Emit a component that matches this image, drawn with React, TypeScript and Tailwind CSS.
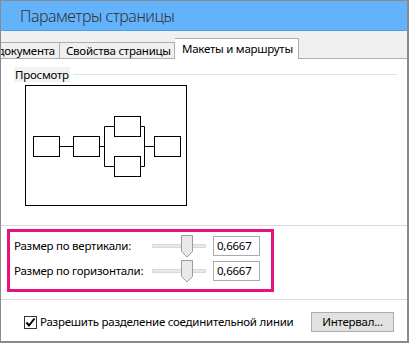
import React from "react";

function Slider() {
  return (
    <div className="relative w-[54px] h-[22px] flex items-center">
      <div className="w-full h-[4px] bg-[#e7e7e7] border border-[#d9d9d9]" />
      <svg className="absolute left-[29px] top-0" width="12" height="23" viewBox="0 0 12 23">
        <path d="M0.5 0.5 H11.5 V16.5 L6 22 L0.5 16.5 Z" fill="#e9e9e9" stroke="#9c9c9c" />
      </svg>
    </div>
  );
}

function SizeRow({ label }: { label: string }) {
  return (
    <div className="flex items-center h-[20px]">
      <span className="w-[138px] whitespace-nowrap">{label}</span>
      <Slider />
      <div className="ml-[7px] w-[47px] h-[20px] border border-[#ababab] bg-white flex items-center pl-[3px]">0,6667</div>
    </div>
  );
}

export default function App() {
  return (
    <div
      className="w-[409px] h-[343px] bg-white flex flex-col border-l border-r-2 border-b-2 border-t border-[#8a8a8a] text-[11.5px] tracking-[-0.25px] text-black whitespace-nowrap"
      style={{ fontFamily: '"Segoe UI", "Noto Sans", sans-serif' }}
    >
      {/* title */}
      <div className="h-[30px] bg-[#63b3fc] border-b border-[#4c9fe6] flex items-center pl-[19px] text-[16px] tracking-[-0.5px] font-light text-[#333]">
        Параметры страницы
      </div>

      {/* tabs */}
      <div className="h-[28px] bg-[#f0f0f0] border-b border-[#adadad] flex items-end">
        <div className="h-[17px] -mb-px border border-l-0 border-[#adadad] bg-[#f0f0f0] flex items-center pr-[4px] overflow-hidden w-[59px] justify-end">
          документа
        </div>
        <div className="h-[17px] -mb-px border border-l-0 border-[#adadad] bg-[#f0f0f0] flex items-center px-[6px] w-[115px]">
          Свойства страницы
        </div>
        <div className="h-[21px] -mb-px border border-b-0 border-l-0 border-[#adadad] bg-white flex items-center px-[7px] w-[124px]">
          Макеты и маршруты
        </div>
      </div>

      {/* preview */}
      <div className="flex items-center mt-[8px] pl-[13px] pr-[10px]">
        <span className="bg-[#f3f3f3] px-[1px] leading-[15px]">Просмотр</span>
        <div className="flex-1 ml-[3px] h-px bg-[#dce2e8]" />
      </div>
      <div className="ml-[24px] mt-[3px] w-[162px] h-[121px] border border-black">
        <svg width="160" height="119" viewBox="0 0 160 119" fill="none" stroke="#000" strokeWidth="1">
          <rect x="7.5" y="50.5" width="26" height="20" />
          <line x1="33.5" y1="60.5" x2="47.5" y2="60.5" />
          <rect x="47.5" y="50.5" width="26" height="20" />
          <line x1="73.5" y1="60.5" x2="78.5" y2="60.5" />
          <path d="M88.5 40.5 H78.5 V80.5 H88.5" />
          <rect x="88.5" y="30.5" width="26" height="20" />
          <rect x="88.5" y="70.5" width="26" height="20" />
          <path d="M114.5 40.5 H118.5 V80.5 H114.5" />
          <line x1="118.5" y1="60.5" x2="128.5" y2="60.5" />
          <rect x="128.5" y="50.5" width="26" height="20" />
        </svg>
      </div>

      <div className="mt-[19px] h-px bg-[#d9d9d9]" />

      {/* highlighted size controls */}
      <div className="ml-[6px] mt-[3px] w-[267px] h-[63px] border-[3px] border-[#e5127f] pl-[4px] pt-[4px] flex flex-col gap-[5px]">
        <SizeRow label="Размер по вертикали:" />
        <SizeRow label="Размер по горизонтали:" />
      </div>

      <div className="mt-[7px] h-px bg-[#d9d9d9]" />

      {/* bottom row */}
      <div className="flex items-center pl-[23px] pr-[13px] mt-[12px]">
        <div className="w-[13px] h-[13px] border border-[#333] bg-white flex items-center justify-center">
          <svg width="11" height="11" viewBox="0 0 11 11">
            <path d="M1.5 5.5 L4 8.5 L9.5 1.5" fill="none" stroke="#000" strokeWidth="2" />
          </svg>
        </div>
        <span className="ml-[3px]">Разрешить разделение соединительной линии</span>
        <div className="ml-auto w-[83px] h-[20px] bg-[#e1e1e1] border border-[#adadad] flex items-center justify-center">
          Интервал...
        </div>
      </div>
    </div>
  );
}
